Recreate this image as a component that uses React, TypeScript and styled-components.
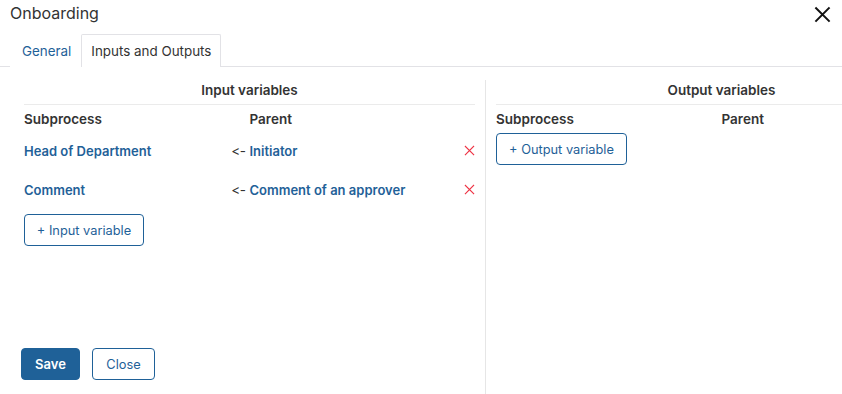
import React from 'react';
import styled, { createGlobalStyle } from 'styled-components';

const blue = '#1f6198';

const GlobalStyle = createGlobalStyle`
  html, body {
    margin: 0;
    padding: 0;
    background: #fff;
    overflow: hidden;
  }
  body {
    font-family: Inter, 'Noto Sans', sans-serif;
    font-variant-ligatures: none;
    font-feature-settings: 'calt' 0;
    color: #333;
  }
`;

const Dialog = styled.div`
  width: 842px;
  height: 394px;
  display: flex;
  flex-direction: column;
  overflow: hidden;
`;

const Header = styled.div`
  display: flex;
  justify-content: space-between;
  align-items: center;
  height: 28px;
  padding: 0 10px 0 10px;
`;

const Title = styled.div`
  font-size: 16px;
  color: #333;
  margin-top: -2px;
`;

const CloseIcon = styled.button`
  border: none;
  background: none;
  padding: 0;
  width: 20px;
  height: 20px;
  display: flex;
  align-items: center;
  justify-content: center;
  cursor: pointer;
`;

const Tabs = styled.div`
  display: flex;
  margin-top: 6px;
  padding-left: 10px;
  border-bottom: 1px solid #e2e2e6;
  height: 32px;
`;

const Tab = styled.div<{ $active?: boolean }>`
  font-size: 13.4px;
  padding: 0 9px 0 ${p => (p.$active ? '9px' : '11px')};
  display: flex;
  align-items: center;
  height: 33px;
  box-sizing: border-box;
  color: ${p => (p.$active ? '#333' : blue)};
  border: 1px solid ${p => (p.$active ? '#e2e2e6' : 'transparent')};
  border-bottom: none;
  background: #fff;
  border-radius: 2px 2px 0 0;
  position: relative;
  z-index: 1;
`;

const Body = styled.div`
  flex: 1;
  display: grid;
  grid-template-columns: 451px 1px 451px;
  column-gap: 10px;
  padding-left: 24px;
  padding-top: 13px;
  min-height: 0;
`;

const Panel = styled.div`
  display: flex;
  flex-direction: column;
`;

const Divider = styled.div`
  background: #e6e6e6;
`;

const PanelTitle = styled.div`
  font-size: 13.5px;
  font-weight: 600;
  text-align: center;
  height: 24px;
  line-height: 21px;
  border-bottom: 1px solid #ebebeb;
`;

const ColumnHeads = styled.div`
  display: grid;
  grid-template-columns: 1fr 1fr;
  font-size: 13.5px;
  font-weight: 600;
  height: 27px;
  align-items: center;
`;

const Row = styled.div`
  display: grid;
  grid-template-columns: 1fr 1fr;
  align-items: center;
  height: 39px;
  margin-top: -1px;
  margin-bottom: 1px;
  font-size: 13px;
  font-weight: 600;
`;

const SubCell = styled.div`
  display: flex;
  justify-content: space-between;
  align-items: center;
  padding-right: 4px;
`;

const Link = styled.span`
  color: ${blue};
`;

const Arrow = styled.span`
  font-weight: 400;
  color: #333;
  font-size: 13.5px;
  letter-spacing: -0.5px;
`;

const ParentCell = styled.div`
  display: flex;
  justify-content: space-between;
  align-items: center;
`;

const Remove = styled.button`
  border: none;
  background: none;
  padding: 0;
  width: 12px;
  height: 12px;
  display: flex;
  align-items: center;
  justify-content: center;
`;

const OutlineButton = styled.button<{ $width: number }>`
  width: ${p => p.$width}px;
  height: 32px;
  border: 1px solid ${blue};
  border-radius: 4px;
  background: #fff;
  color: ${blue};
  font-family: Inter, 'Noto Sans', sans-serif;
  font-size: 12.8px;
  padding: 0;
  cursor: pointer;
`;

const AddArea = styled.div<{ $top: number }>`
  margin-top: ${p => p.$top}px;
`;

const Footer = styled.div`
  margin-top: auto;
  margin-left: -3px;
  margin-bottom: 14px;
  display: flex;
  gap: 12px;
`;

const SaveButton = styled.button`
  width: 59px;
  height: 32px;
  border: 1px solid ${blue};
  border-radius: 4px;
  background: ${blue};
  color: #fff;
  font-family: Inter, 'Noto Sans', sans-serif;
  font-size: 13px;
  font-weight: 600;
  padding: 0;
`;

const X = ({ size, color, width }: { size: number; color: string; width: number }) => (
  <svg width={size} height={size} viewBox="0 0 16 16">
    <path d="M2 2L14 14M14 2L2 14" stroke={color} strokeWidth={width} strokeLinecap="square" />
  </svg>
);

const inputs = [
  { sub: 'Head of Department', parent: 'Initiator' },
  { sub: 'Comment', parent: 'Comment of an approver' },
];

export default function App() {
  return (
    <Dialog>
      <GlobalStyle />
      <Header>
        <Title>Onboarding</Title>
        <CloseIcon>
          <X size={17} color="#111" width={1.9} />
        </CloseIcon>
      </Header>
      <Tabs>
        <Tab>General</Tab>
        <Tab $active>Inputs and Outputs</Tab>
      </Tabs>
      <Body>
        <Panel>
          <PanelTitle>Input variables</PanelTitle>
          <ColumnHeads>
            <span>Subprocess</span>
            <span>Parent</span>
          </ColumnHeads>
          {inputs.map(r => (
            <Row key={r.sub}>
              <SubCell>
                <Link>{r.sub}</Link>
                <Arrow>&lt;-</Arrow>
              </SubCell>
              <ParentCell>
                <Link>{r.parent}</Link>
                <Remove>
                  <X size={11} color="#ee3344" width={1.7} />
                </Remove>
              </ParentCell>
            </Row>
          ))}
          <AddArea $top={4}>
            <OutlineButton $width={120}>+ Input variable</OutlineButton>
          </AddArea>
          <Footer>
            <SaveButton>Save</SaveButton>
            <OutlineButton $width={63}>Close</OutlineButton>
          </Footer>
        </Panel>
        <Divider />
        <Panel>
          <PanelTitle>Output variables</PanelTitle>
          <ColumnHeads>
            <span>Subprocess</span>
            <span>Parent</span>
          </ColumnHeads>
          <AddArea $top={1}>
            <OutlineButton $width={131}>+ Output variable</OutlineButton>
          </AddArea>
        </Panel>
      </Body>
    </Dialog>
  );
}
